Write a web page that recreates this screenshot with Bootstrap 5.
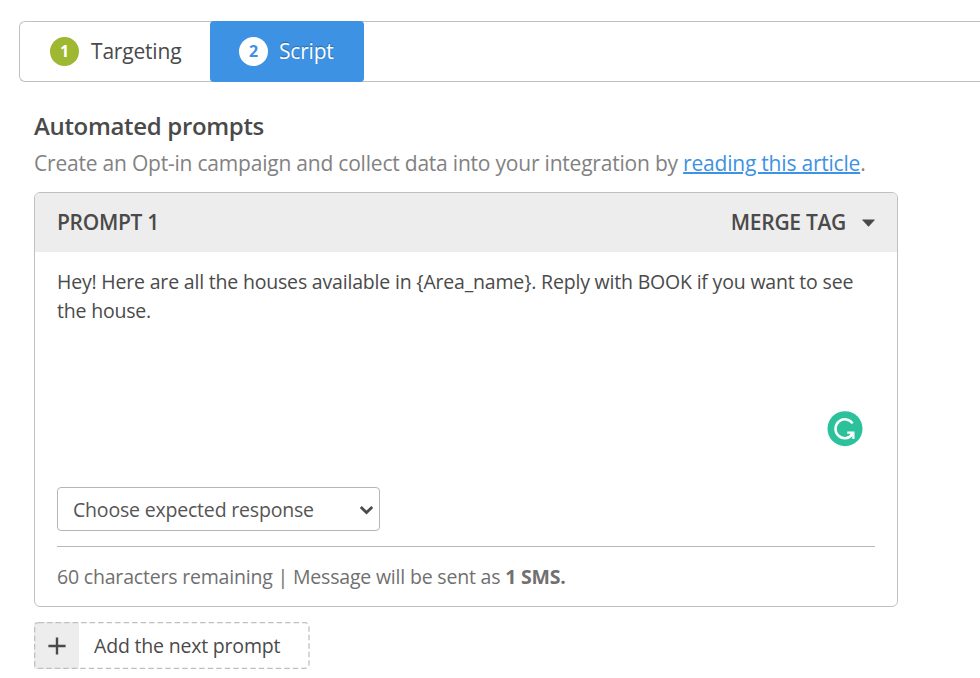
<!DOCTYPE html>
<html lang="en">
<head>
<meta charset="utf-8">
<meta name="viewport" content="width=device-width, initial-scale=1">
<title>Automated prompts</title>
<link href="https://cdn.jsdelivr.net/npm/bootstrap@5.3.0/dist/css/bootstrap.min.css" rel="stylesheet">
<style>
body{font-family:"Open Sans",sans-serif;color:#4a4a4a;background:#fff;overflow:hidden;font-size:19.5px;letter-spacing:-.19px}
.steps{margin:21px 0 0 19px;height:61px;border:1px solid #c0c0c0;border-right:0;border-radius:6px 0 0 6px;flex-wrap:nowrap}
.steps .nav-link{height:61px;margin-top:-1px;font-size:21px;line-height:28px;color:#4a4a4a;padding:0 0 1px;border-radius:4px}
.steps .first{width:190px;padding-left:30px}
.steps .nav-link.active{width:154px;padding-left:29px;background:#3d92e4;color:#fff;text-shadow:0 -1px 1px rgba(0,0,0,.3)}
.num{width:29px;height:29px;font-size:16px;font-weight:700;margin-right:12px;background:#9fb832;color:#fff;text-shadow:none}
.active .num{background:#fff;color:#3d92e4;margin-right:11px}
.content{margin-left:34px;width:864px}
.title{font-size:24px;line-height:32px;font-weight:600;margin:28px 0 0;letter-spacing:-.33px}
.intro{font-size:21px;line-height:30px;color:#828282;margin:6px 0 14px;white-space:nowrap;letter-spacing:-.21px}
.intro a{color:#3d92e4;text-decoration-thickness:1.5px}
.prompt{height:415px;border:1px solid #c0c0c0;border-radius:6px}
.prompt .card-header{height:59px;background:#ededed;border:0;padding:1px 22px 0;font-size:21px;font-weight:600;letter-spacing:-.3px}
.prompt .card-body{padding:15px 22px 0}
.message{height:220px;line-height:29px}
.helper{right:34px;top:218px}
.answer{width:323px;height:44px;border:1px solid #b5b5b5;border-radius:4px;padding:1px 5px 0 15px;color:#555;letter-spacing:inherit}
.rule{margin:15px 0 0;border-top:1px solid #b8b8b8;opacity:1}
.count{line-height:28px;color:#707070;margin:16px 0 0;white-space:nowrap}
.count strong{font-weight:700}
.add{margin-top:15px;width:276px;height:47px;border:0;background:#fff;color:#4a4a4a;letter-spacing:inherit}
.plus{width:45px;background:#ededed}
.add-label{padding-left:15px}
</style>
</head>
<body>
<nav class="steps nav nav-pills">
  <a class="nav-link first d-flex align-items-center" href="#"><span class="num rounded-circle d-flex align-items-center justify-content-center">1</span><span>Targeting</span></a>
  <a class="nav-link active d-flex align-items-center" href="#"><span class="num rounded-circle d-flex align-items-center justify-content-center">2</span><span>Script</span></a>
</nav>
<main class="content">
  <h1 class="title">Automated prompts</h1>
  <p class="intro">Create an Opt-in campaign and collect data into your integration by <a href="#">reading this article</a>.</p>
  <section class="card prompt position-relative">
    <div class="card-header d-flex align-items-center justify-content-between">
      <span>PROMPT 1</span>
      <span class="d-flex align-items-center"><span>MERGE TAG</span>
        <svg class="ms-3" width="13" height="8" viewBox="0 0 13 8"><path d="M.6 .5H12.4Q13 .7 12.5 1.3L7 7.2Q6.5 7.6 6 7.2L.5 1.3Q0 .7 .6 .5Z" fill="#4a4a4a"/></svg></span>
    </div>
    <div class="card-body">
      <div class="message">Hey! Here are all the houses available in {Area_name}. Reply with BOOK if you want to see the house.</div>
      <button type="button" class="answer bg-white d-flex align-items-center justify-content-between"><span>Choose expected response</span>
        <svg width="15" height="10" viewBox="0 0 15 10" fill="none" stroke="#4a4a4a" stroke-width="2.8"><path d="M1.8 2 7.5 7.6 13.2 2"/></svg></button>
      <hr class="rule">
      <p class="count">60 characters remaining | Message will be sent as <strong>1 SMS.</strong></p>
    </div>
    <svg class="helper position-absolute" width="36" height="36" viewBox="0 0 36 36" fill="none"><circle cx="18" cy="17.7" r="17.5" fill="#2bc29b"/><path d="M25.6 12.4A9.4 9.4 0 1 0 25 23.9" stroke="#fff" stroke-width="2.5"/><path d="M20.2 21.6H26.4V28M26.2 21.8 22.8 25.4" stroke="#fff" stroke-width="2.2"/></svg>
  </section>
  <button type="button" class="add d-flex align-items-stretch p-0 position-relative">
    <span class="plus d-flex align-items-center justify-content-center"><svg width="18" height="18" viewBox="0 0 18 18" stroke="#4a4a4a" stroke-width="2.4"><path d="M9 .4V17.6M.4 9H17.6"/></svg></span>
    <span class="add-label align-self-center">Add the next prompt</span>
    <svg class="position-absolute top-0 start-0" width="276" height="47" fill="none"><rect x=".6" y=".7" width="274.4" height="45.6" rx="4" stroke="#c0c0c0" stroke-width="1.3" stroke-dasharray="5.5 3"/></svg>
  </button>
</main>
<script src="https://cdn.jsdelivr.net/npm/bootstrap@5.3.0/dist/js/bootstrap.bundle.min.js"></script>
</body>
</html>
